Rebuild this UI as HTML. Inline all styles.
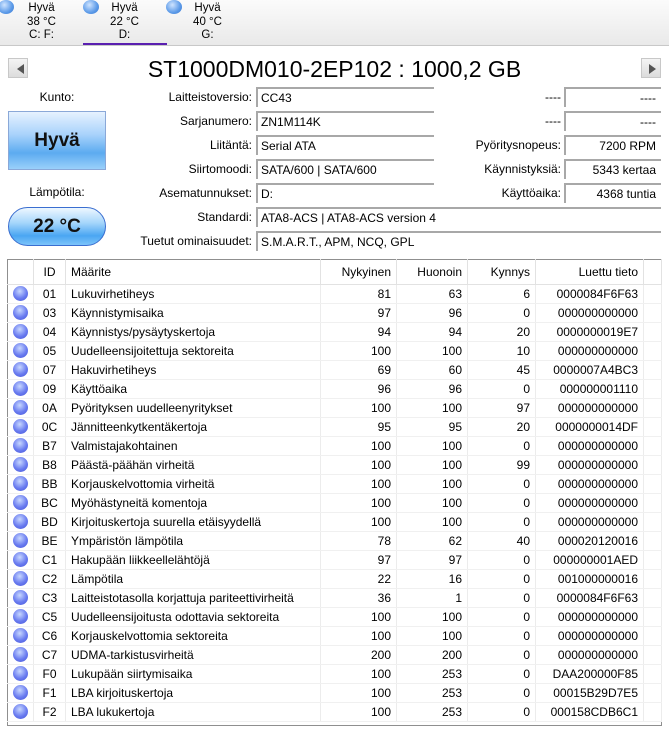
<!DOCTYPE html><html><head><meta charset="utf-8"><style>
*{box-sizing:border-box;margin:0;padding:0}
body{width:669px;height:729px;background:#fff;font-family:"Liberation Sans",sans-serif;font-size:12px;color:#000;position:relative;overflow:hidden}
.tabs{position:absolute;left:0;top:0;width:669px;height:46px;background:linear-gradient(#fbfbfb,#e9e9e9);border-bottom:1px solid #c8c8c8}
.tab{position:absolute;top:2px;width:83px;text-align:center;font-size:11.5px;line-height:13.5px;padding-left:0}
.tab .b{position:absolute;top:-2px;width:16px;height:14px;border-radius:50%;background:radial-gradient(circle at 40% 35%,#cfe4ff,#5b9ae8 60%,#3c78d0);}
.ul{position:absolute;left:83px;top:43px;width:84px;height:2px;background:#5a1fb0}
.title{position:absolute;left:0;top:55px;width:669px;text-align:center;font-size:23px;line-height:28px}
.arr{position:absolute;top:58px;width:20px;height:20px;border:1px solid #c8c8c8;background:linear-gradient(#f4f4f4,#dcdcdc)}
.arr:after{content:"";position:absolute;top:5px;border:5px solid transparent}
.l:after{left:3px;border-right:7px solid #555}
.r:after{left:7px;border-left:7px solid #555}
.lab{position:absolute;text-align:right;line-height:20px;height:20px}
.box{position:absolute;height:20px;line-height:19px;border-top:2px solid #a8a8a8;border-left:2px solid #a8a8a8;padding-left:3px;white-space:nowrap}
.rt{text-align:right;padding-right:5px}
.health{position:absolute;left:8px;top:111px;width:98px;height:59px;border:1px solid #8aa8d8;background:linear-gradient(#e6f2ff 0%,#a8d2fb 40%,#5cabf0 72%,#9ad0fa 100%);text-align:center;font-weight:bold;font-size:19px;line-height:58px;color:#111}
.pill{position:absolute;left:8px;top:207px;width:98px;height:39px;border-radius:20px;border:1px solid #3a6ed0;background:linear-gradient(#eef7ff 0%,#a6d6fb 40%,#4aa6f2 75%,#7cc4fa 100%);text-align:center;font-weight:bold;font-size:19px;line-height:38px;color:#111}
table{position:absolute;left:7px;top:259px;width:655px;border-collapse:collapse;border:1px solid #8f8f8f;height:467px}
td{height:19px;line-height:18px;border-right:1px solid #ececec;border-bottom:1px solid #f0f0f0;padding:0 5px;white-space:nowrap;font-size:12px}
tr.h td{height:25px;line-height:24px;border-right:1px solid #e2e2e2;border-bottom:1px solid #e2e2e2}
td.n{text-align:right}
td.i{text-align:center;padding:0}
.d{display:inline-block;width:15px;height:15px;border-radius:50%;vertical-align:middle;background:radial-gradient(circle at 45% 35%,#c8d8ff,#6a7cf0 55%,#4454d8);margin-top:-2px}
td.f{border-bottom:none}
</style></head><body>
<div class="tabs">
<div class="tab" style="left:0"><span class="b" style="left:-2px"></span>Hyvä<br>38 °C<br>C: F:</div>
<div class="tab" style="left:83px"><span class="b" style="left:0"></span>Hyvä<br>22 °C<br>D:</div>
<div class="tab" style="left:166px"><span class="b" style="left:0"></span>Hyvä<br>40 °C<br>G:</div>
<div class="ul"></div></div>
<div class="arr l" style="left:8px"></div><div class="arr r" style="left:641px"></div>
<div class="title">ST1000DM010-2EP102 : 1000,2 GB</div>
<div class="lab" style="left:8px;top:87px;width:98px;text-align:center">Kunto:</div>
<div class="health">Hyvä</div>
<div class="lab" style="left:8px;top:182px;width:98px;text-align:center">Lämpötila:</div>
<div class="pill">22 °C</div>

<div class="lab" style="left:100px;top:87px;width:152px">Laitteistoversio:</div><div class="box" style="left:256px;top:87px;width:178px">CC43</div>
<div class="lab" style="left:100px;top:111px;width:152px">Sarjanumero:</div><div class="box" style="left:256px;top:111px;width:178px">ZN1M114K</div>
<div class="lab" style="left:100px;top:135px;width:152px">Liitäntä:</div><div class="box" style="left:256px;top:135px;width:178px">Serial ATA</div>
<div class="lab" style="left:100px;top:159px;width:152px">Siirtomoodi:</div><div class="box" style="left:256px;top:159px;width:178px">SATA/600 | SATA/600</div>
<div class="lab" style="left:100px;top:183px;width:152px">Asematunnukset:</div><div class="box" style="left:256px;top:183px;width:178px">D:</div>
<div class="lab" style="left:100px;top:207px;width:152px">Standardi:</div><div class="box" style="left:256px;top:207px;width:405px">ATA8-ACS | ATA8-ACS version 4</div>
<div class="lab" style="left:100px;top:231px;width:152px">Tuetut ominaisuudet:</div><div class="box" style="left:256px;top:231px;width:405px">S.M.A.R.T., APM, NCQ, GPL</div>

<div class="lab" style="left:440px;top:87px;width:121px">----</div><div class="box rt" style="left:564px;top:87px;width:97px">----</div>
<div class="lab" style="left:440px;top:111px;width:121px">----</div><div class="box rt" style="left:564px;top:111px;width:97px">----</div>
<div class="lab" style="left:440px;top:135px;width:121px">Pyöritysnopeus:</div><div class="box rt" style="left:564px;top:135px;width:97px">7200 RPM</div>
<div class="lab" style="left:440px;top:159px;width:121px">Käynnistyksiä:</div><div class="box rt" style="left:564px;top:159px;width:97px">5343 kertaa</div>
<div class="lab" style="left:440px;top:183px;width:121px">Käyttöaika:</div><div class="box rt" style="left:564px;top:183px;width:97px">4368 tuntia</div>

<table>
<colgroup><col style="width:26px"><col style="width:32px"><col style="width:255px"><col style="width:76px"><col style="width:71px"><col style="width:68px"><col style="width:108px"><col></colgroup>
<tr class="h"><td></td><td class="i">ID</td><td>Määrite</td><td class="n">Nykyinen</td><td class="n">Huonoin</td><td class="n">Kynnys</td><td class="n">Luettu tieto</td><td></td></tr>
<tr><td class="i"><span class="d"></span></td><td class="i">01</td><td>Lukuvirhetiheys</td><td class="n">81</td><td class="n">63</td><td class="n">6</td><td class="n">0000084F6F63</td><td></td></tr>
<tr><td class="i"><span class="d"></span></td><td class="i">03</td><td>Käynnistymisaika</td><td class="n">97</td><td class="n">96</td><td class="n">0</td><td class="n">000000000000</td><td></td></tr>
<tr><td class="i"><span class="d"></span></td><td class="i">04</td><td>Käynnistys/pysäytyskertoja</td><td class="n">94</td><td class="n">94</td><td class="n">20</td><td class="n">0000000019E7</td><td></td></tr>
<tr><td class="i"><span class="d"></span></td><td class="i">05</td><td>Uudelleensijoitettuja sektoreita</td><td class="n">100</td><td class="n">100</td><td class="n">10</td><td class="n">000000000000</td><td></td></tr>
<tr><td class="i"><span class="d"></span></td><td class="i">07</td><td>Hakuvirhetiheys</td><td class="n">69</td><td class="n">60</td><td class="n">45</td><td class="n">0000007A4BC3</td><td></td></tr>
<tr><td class="i"><span class="d"></span></td><td class="i">09</td><td>Käyttöaika</td><td class="n">96</td><td class="n">96</td><td class="n">0</td><td class="n">000000001110</td><td></td></tr>
<tr><td class="i"><span class="d"></span></td><td class="i">0A</td><td>Pyörityksen uudelleenyritykset</td><td class="n">100</td><td class="n">100</td><td class="n">97</td><td class="n">000000000000</td><td></td></tr>
<tr><td class="i"><span class="d"></span></td><td class="i">0C</td><td>Jännitteenkytkentäkertoja</td><td class="n">95</td><td class="n">95</td><td class="n">20</td><td class="n">0000000014DF</td><td></td></tr>
<tr><td class="i"><span class="d"></span></td><td class="i">B7</td><td>Valmistajakohtainen</td><td class="n">100</td><td class="n">100</td><td class="n">0</td><td class="n">000000000000</td><td></td></tr>
<tr><td class="i"><span class="d"></span></td><td class="i">B8</td><td>Päästä-päähän virheitä</td><td class="n">100</td><td class="n">100</td><td class="n">99</td><td class="n">000000000000</td><td></td></tr>
<tr><td class="i"><span class="d"></span></td><td class="i">BB</td><td>Korjauskelvottomia virheitä</td><td class="n">100</td><td class="n">100</td><td class="n">0</td><td class="n">000000000000</td><td></td></tr>
<tr><td class="i"><span class="d"></span></td><td class="i">BC</td><td>Myöhästyneitä komentoja</td><td class="n">100</td><td class="n">100</td><td class="n">0</td><td class="n">000000000000</td><td></td></tr>
<tr><td class="i"><span class="d"></span></td><td class="i">BD</td><td>Kirjoituskertoja suurella etäisyydellä</td><td class="n">100</td><td class="n">100</td><td class="n">0</td><td class="n">000000000000</td><td></td></tr>
<tr><td class="i"><span class="d"></span></td><td class="i">BE</td><td>Ympäristön lämpötila</td><td class="n">78</td><td class="n">62</td><td class="n">40</td><td class="n">000020120016</td><td></td></tr>
<tr><td class="i"><span class="d"></span></td><td class="i">C1</td><td>Hakupään liikkeellelähtöjä</td><td class="n">97</td><td class="n">97</td><td class="n">0</td><td class="n">000000001AED</td><td></td></tr>
<tr><td class="i"><span class="d"></span></td><td class="i">C2</td><td>Lämpötila</td><td class="n">22</td><td class="n">16</td><td class="n">0</td><td class="n">001000000016</td><td></td></tr>
<tr><td class="i"><span class="d"></span></td><td class="i">C3</td><td>Laitteistotasolla korjattuja pariteettivirheitä</td><td class="n">36</td><td class="n">1</td><td class="n">0</td><td class="n">0000084F6F63</td><td></td></tr>
<tr><td class="i"><span class="d"></span></td><td class="i">C5</td><td>Uudelleensijoitusta odottavia sektoreita</td><td class="n">100</td><td class="n">100</td><td class="n">0</td><td class="n">000000000000</td><td></td></tr>
<tr><td class="i"><span class="d"></span></td><td class="i">C6</td><td>Korjauskelvottomia sektoreita</td><td class="n">100</td><td class="n">100</td><td class="n">0</td><td class="n">000000000000</td><td></td></tr>
<tr><td class="i"><span class="d"></span></td><td class="i">C7</td><td>UDMA-tarkistusvirheitä</td><td class="n">200</td><td class="n">200</td><td class="n">0</td><td class="n">000000000000</td><td></td></tr>
<tr><td class="i"><span class="d"></span></td><td class="i">F0</td><td>Lukupään siirtymisaika</td><td class="n">100</td><td class="n">253</td><td class="n">0</td><td class="n">DAA200000F85</td><td></td></tr>
<tr><td class="i"><span class="d"></span></td><td class="i">F1</td><td>LBA kirjoituskertoja</td><td class="n">100</td><td class="n">253</td><td class="n">0</td><td class="n">00015B29D7E5</td><td></td></tr>
<tr><td class="i"><span class="d"></span></td><td class="i">F2</td><td>LBA lukukertoja</td><td class="n">100</td><td class="n">253</td><td class="n">0</td><td class="n">000158CDB6C1</td><td></td></tr>
<tr><td class="f" style="height:auto;border-right:none" colspan="8"></td></tr>
</table>
</body></html>
